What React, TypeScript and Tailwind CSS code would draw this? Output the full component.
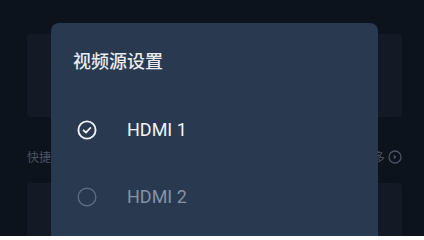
import React from "react";

const cjk = '"Noto Sans CJK SC", "Noto Sans", sans-serif';
const latin = 'Roboto, "Noto Sans CJK SC", sans-serif';

function CheckCircle() {
  return (
    <svg width="20" height="20" viewBox="0 0 20 20" fill="none">
      <circle cx="10" cy="10" r="8.6" stroke="#eef1f5" strokeWidth="1.9" />
      <path
        d="M6.6 10.3 L8.9 12.6 L13.4 7.9"
        stroke="#eef1f5"
        strokeWidth="1.8"
        strokeLinecap="round"
        strokeLinejoin="round"
      />
    </svg>
  );
}

function EmptyCircle() {
  return (
    <svg width="20" height="20" viewBox="0 0 20 20" fill="none">
      <circle cx="10" cy="10" r="8.8" stroke="#5c6b80" strokeWidth="1.4" />
    </svg>
  );
}

export default function App() {
  const sources = [
    { name: "HDMI 1", active: true },
    { name: "HDMI 2", active: false },
  ];

  return (
    <div className="relative h-[236px] w-[424px] overflow-hidden bg-[#0d131d]">
      {/* ── Page behind the dialog ─────────────────────────────────────── */}
      <div className="flex flex-col pl-[27px] pr-[22px] pt-[34px]">
        <div className="h-[83px] rounded-[4px] bg-[#131a25]" />
        <div className="flex h-[66px] items-center justify-between pt-[14px]">
          <span className="text-[12px] text-[#4b5463]" style={{ fontFamily: cjk }}>
            快捷操作
          </span>
          <span className="flex items-center gap-[3px] text-[12px] text-[#4b5463]" style={{ fontFamily: cjk }}>
            更多
            <svg width="14" height="14" viewBox="0 0 14 14" fill="none">
              <circle cx="7" cy="7" r="6" stroke="#4b5463" strokeWidth="1.3" />
              <path d="M5.8 4.6 L8.4 7 L5.8 9.4 Z" fill="#4b5463" />
            </svg>
          </span>
        </div>
        <div className="h-[80px] rounded-[4px] bg-[#131a25]" />
      </div>

      {/* ── Source dialog ──────────────────────────────────────────────── */}
      <div className="absolute left-[51px] top-[23px] h-[240px] w-[327px] rounded-[8px] bg-[#293a50] pt-[25px]">
        <h2
          className="pl-[22px] text-[18px] leading-[24px] font-medium text-[#e8ebf0]"
          style={{ fontFamily: cjk }}
        >
          视频源设置
        </h2>
        <ul className="mt-[24px]">
          {sources.map((s) => (
            <li key={s.name} className="flex h-[67px] items-center gap-[30px] pl-[26px]">
              {s.active ? <CheckCircle /> : <EmptyCircle />}
              <span
                className={`text-[18px] font-normal ${s.active ? "text-[#f2f4f7]" : "text-[#8592a5]"}`}
                style={{ fontFamily: latin }}
              >
                {s.name}
              </span>
            </li>
          ))}
        </ul>
      </div>
    </div>
  );
}
